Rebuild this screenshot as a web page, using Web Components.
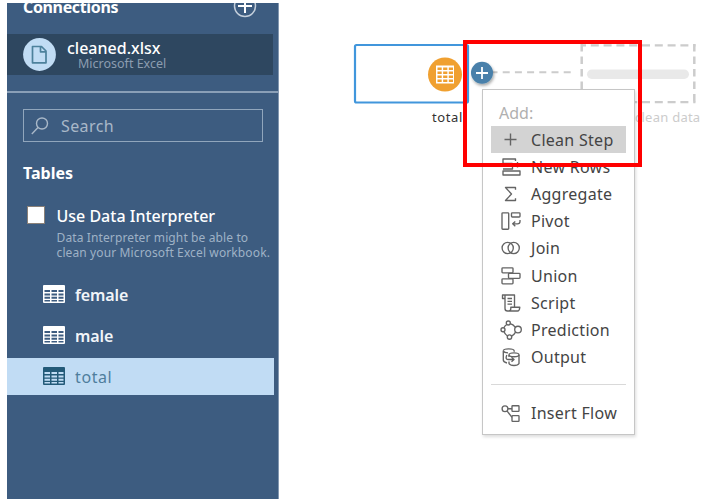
<!DOCTYPE html>
<html lang="en">
<head>
<meta charset="utf-8">
<title>Flow editor</title>
<style>
body{margin:0;background:#fff;font-family:"Noto Sans","Open Sans",sans-serif;overflow:hidden}
</style>
</head>
<body>
<flow-app></flow-app>
<script>
const define = (name, css, html, init) => customElements.define(name, class extends HTMLElement {
  connectedCallback() {
    if (this.shadowRoot) return;
    const root = this.attachShadow({ mode: "open" });
    root.innerHTML = "<style>:host{display:block;box-sizing:border-box}*{box-sizing:border-box}" + css + "</style>" + html;
    if (init) init(this, root);
  }
});

/* 22x20 line icons */
const icons = {
  plus: '<path d="M10.500 3.500v12M4.500 9.500h12" stroke-width="1.4"/>',
  rows: '<path d="M15.500 4V2H3v4.500h9.500M17.500 5v5.500M14.800 7.800h5.400M3 9h9.500v3H3M3 14h17v4H3z"/>',
  sigma: '<path d="M15.500 5.800V3.500H5.500L11.500 10 5.500 16.500H15.500V14.200"/>',
  pivot: '<rect x="2" y="1.800" width="6.700" height="16.400" rx=".8"/><rect x="11.500" y="1.800" width="8.500" height="4.200" rx=".8"/><path d="M20 9v1.500q0 2.300-2.500 2.300h-4M15.300 10.500 12.700 12.800l2.600 2.400"/>',
  join: '<circle cx="7.700" cy="10" r="5.600"/><circle cx="13.700" cy="10" r="5.600"/>',
  union: '<rect x="2" y="1.800" width="11" height="5" rx=".8"/><rect x="8.500" y="7.300" width="11.500" height="5" rx=".8"/><rect x="2" y="12.800" width="11" height="5" rx=".8"/>',
  script: '<path d="M5 5.500h-2.500v-3.500h12v11.500M5 2.500v13q0 2.500 2.500 2.500h10q2 0 2.300-3.800h-9v1.500q0 2.300-2.500 2.300M7.500 5.500h4.500M7.500 8.300h4.500M7.500 11.100h4.500"/>',
  prediction: '<circle cx="8.300" cy="3" r="2"/><circle cx="3" cy="9.700" r="2"/><circle cx="18" cy="9.500" r="3.300"/><circle cx="9.500" cy="17" r="2.200"/><path d="M6.800 4.500Q4.800 5.500 3.900 7.800M10.200 3.600q3 .7 5 3.500M3.900 11.600q1 2.700 3.600 4.400M11.600 16.200q2.400-1.200 4-4"/>',
  output: '<path d="M7 16C4.500 15.300 3.300 14.500 3.300 13V4M14.200 4.800V3.800M3.300 3.800q0-2 5.400-2t5.400 2M3.300 4q1 1.800 4.700 1.900"/><ellipse cx="14" cy="7.800" rx="5" ry="1.900"/><path d="M9 8v2M9 14.500v2q1 2 5 2t5-2V8M6.800 8Q5 12.500 8 12.500h5.800M11.500 10.200l2.500 2.300-2.500 2.300"/>',
  flow: '<circle cx="5" cy="5.700" r="2.900"/><rect x="12" y="2.700" width="7" height="5.700" rx=".6"/><rect x="12" y="12.600" width="7" height="5.700" rx=".6"/><path d="M8 5.700h4M7 7.900l5 6.500"/>'
};
define("line-icon", ":host{width:22px;height:20px;flex:none}svg{display:block;fill:none;stroke:#646464;stroke-width:1.35;stroke-linejoin:round}", "", (el, root) => {
  root.innerHTML += `<svg width="22" height="20" viewBox="0 0 22 20">${icons[el.getAttribute("name")]}</svg>`;
});

define("grid-icon", ":host{width:22px;height:18px;flex:none}svg{display:block}",
 `<svg width="22" height="18" viewBox="0 0 22 18"><rect width="22" height="18" rx="1" fill="currentColor"/><g fill="var(--cell)">
 <path d="M1.500 5h5.500v2h-5.500zM8.500 5h5.500v2h-5.500zM15.500 5h5v2h-5zM1.500 8.500h5.500v2h-5.500zM8.500 8.500h5.500v2h-5.500zM15.500 8.500h5v2h-5zM1.500 11.800h5.500v2h-5.500zM8.500 11.800h5.500v2h-5.500zM15.500 11.800h5v2h-5zM1.500 15h5.500v1.600h-5.500zM8.500 15h5.500v1.600h-5.500zM15.500 15h5v1.600h-5z"/></g></svg>`);

define("table-row", `:host{display:flex;align-items:center;width:266.500px;height:37px;margin-bottom:4px;padding-left:36px;gap:10px;color:#fff;--cell:#3d5c80;font-size:16px;font-weight:600;letter-spacing:-.1px}
:host([selected]){background:#c1dcf4;color:#235a78;--cell:#c1dcf4;font-weight:400;letter-spacing:.6px}
grid-icon{margin-bottom:2px}
span{line-height:22px;color:#f1f4f8}:host([selected]) span{color:#4f7e9d}`,
 `<grid-icon></grid-icon><span><slot></slot></span>`);

define("connection-row", `:host{display:flex;width:266px;height:41px;background:#2e4760;padding:4px 0 0 16px;gap:11px}
svg{flex:none;display:block}.n{font-size:16px;line-height:20px;color:#fff;font-weight:500}.s{font-size:12.5px;line-height:14px;color:#8c9db0;padding-left:11px;margin-top:-1px}`,
 `<svg width="33" height="33" viewBox="0 0 33 33"><circle cx="16.500" cy="16.500" r="16.400" fill="#c1dcf4"/><path d="M9.500 8.500h9l4.500 4.500v11.800h-13.500zM17.500 8.500v5.300h5.500" fill="none" stroke="#4d819c" stroke-width="1.700" stroke-linejoin="round"/></svg>
 <div><div class="n"><slot></slot></div><div class="s"><slot name="type"></slot></div></div>`);

define("search-box", `:host{display:flex;align-items:center;width:240px;height:33px;border:1px solid #91a6bc;margin-left:16px;padding-left:7px;gap:12px;color:#a9b8c8;font-size:16px;letter-spacing:.4px}svg{display:block}`,
 `<svg width="18" height="18" viewBox="0 0 18 18" fill="none" stroke="#a9b8c8" stroke-width="1.400"><circle cx="11" cy="6.500" r="5.500"/><path d="M7 10.500.8 17"/></svg><span><slot></slot></span>`);

define("side-bar", `:host{display:flex;flex-direction:column;width:272px;height:496px;background:#3d5c80;border-right:1px solid #8398b1;overflow:hidden;color:#fff}
header{display:flex;justify-content:space-between;height:31px;padding:0 21px 0 16px;font-weight:700;font-size:16px;letter-spacing:-.35px}
header span{line-height:22px;margin-top:-7px}header svg{margin-top:-9px;display:block}
hr{border:0;height:2px;width:100%;background:#8a9fb7;margin:16px 0 16px}
h2{font-size:16px;line-height:22px;font-weight:700;margin:20px 0 0 16px;height:22px}
.opt{display:flex;gap:12px;margin:22px 0 16px 19.500px;height:54px}
.box{width:18px;height:18px;background:#fff;border:1px solid #8b8178;flex:none}
.l{font-size:16px;line-height:22px;margin-top:-1px;white-space:nowrap;font-weight:500}
.d{font-size:12px;line-height:15px;color:#9fb2c6;white-space:nowrap;margin-top:3px;letter-spacing:.12px}`,
 `<header><span>Connections</span><svg width="24" height="24" viewBox="0 0 24 24" fill="none" stroke="#c4cfdb" stroke-width="1.500"><circle cx="12" cy="12" r="10.500"/><path d="M12 5v14M5 12h14" stroke="#fff" stroke-width="2"/></svg></header>
 <connection-row>cleaned.xlsx<span slot="type">Microsoft Excel</span></connection-row><hr>
 <search-box>Search</search-box><h2><span>Tables</span></h2>
 <div class="opt"><div class="box"></div><div><div class="l"><span>Use Data Interpreter</span></div><div class="d"><span>Data Interpreter might be able to</span><br><span>clean your Microsoft Excel workbook.</span></div></div></div>
 <table-row>female</table-row><table-row>male</table-row><table-row selected>total</table-row>`);

define("menu-item", `:host{display:flex;align-items:center;height:27.200px;gap:9px;padding-left:9px;font-size:16px;letter-spacing:.28px;color:#444;white-space:nowrap}
:host([active]){background:#d3d3d3}`, `<line-icon></line-icon><span><slot></slot></span>`, (el, root) => {
  const i = document.createElement("line-icon"); i.setAttribute("name", el.getAttribute("icon"));
  root.querySelector("line-icon").replaceWith(i);
});

define("add-menu", `:host{width:153px;height:346px;background:#fff;border:1.500px solid #c6c6c6;padding:11px 8px 0;box-shadow:1px 2px 3px #0002}
.h{font-size:16px;line-height:24px;height:25px;padding-left:8px;color:#b0b0b0}hr{border:0;height:1px;background:#d9d9d9;margin:13px 0 15px}`,
 `<div class="h"><span>Add:</span></div><menu-item icon="plus" active>Clean Step</menu-item><menu-item icon="rows">New Rows</menu-item><menu-item icon="sigma">Aggregate</menu-item><menu-item icon="pivot">Pivot</menu-item><menu-item icon="join">Join</menu-item><menu-item icon="union">Union</menu-item><menu-item icon="script">Script</menu-item><menu-item icon="prediction">Prediction</menu-item><menu-item icon="output">Output</menu-item><hr><menu-item icon="flow">Insert Flow</menu-item>`);

define("flow-canvas", `:host{position:relative;flex:1;height:500px}
svg{position:absolute;left:0;top:0}.lab{position:absolute;font-size:13px;line-height:18px;white-space:nowrap;letter-spacing:.25px}
.t{left:153px;top:108px;color:#333;letter-spacing:.6px}.c{left:356px;top:108px;color:#ccc}
add-menu{position:absolute;left:203px;top:89px}.mark{position:absolute;left:184px;top:40px;width:179px;height:127px;border:4px solid #f00}`,
 `<svg width="432" height="500" viewBox="279 0 432 500"><defs><filter id="s" x="-30%" y="-30%" width="160%" height="170%"><feDropShadow dx="1" dy="2" stdDeviation="1.500" flood-opacity=".35"/></filter></defs>
 <rect x="355" y="45" width="113" height="57.500" rx="1.500" fill="#fff" stroke="#4196dc" stroke-width="2.200"/>
 <circle cx="445" cy="74.500" r="17" fill="#f0a030"/><rect x="436" y="65.500" width="18" height="18" fill="#fff"/>
 <path d="M437.500 68.700h15.500M437.500 72.700h15.500M437.500 76.700h15.500M437.500 80.700h15.500" stroke="#f0a030" stroke-width="2.500" stroke-dasharray="4.200 1.450"/>
 <path d="M490.500 72.300H572" stroke="#ccc" stroke-width="2" stroke-dasharray="7 5.200"/>
 <path d="M581 45.300H695.500M581 102.200H695.500" stroke="#ccc" stroke-width="2.200" stroke-dasharray="8 4.800" stroke-dashoffset="3"/>
 <path d="M581.700 44V103.500M694.300 44V103.500" stroke="#ccc" stroke-width="2.500" stroke-dasharray="7.500 5"/>
 <rect x="587" y="69.500" width="102" height="9.500" rx="4.700" fill="#e9e9e9"/>
 <circle cx="482" cy="72.800" r="11" fill="#4880aa" filter="url(#s)"/><path d="M482 67v12M476 73h12" stroke="#fff" stroke-width="1.800"/></svg>
 <span class="lab t">total</span><span class="lab c">clean data</span><add-menu></add-menu><div class="mark"></div>`);

define("flow-app", ":host{display:flex;width:711px;height:500px;padding-left:7px}side-bar{margin-top:3px;flex:none}", "<side-bar></side-bar><flow-canvas></flow-canvas>");
</script>
</body>
</html>
